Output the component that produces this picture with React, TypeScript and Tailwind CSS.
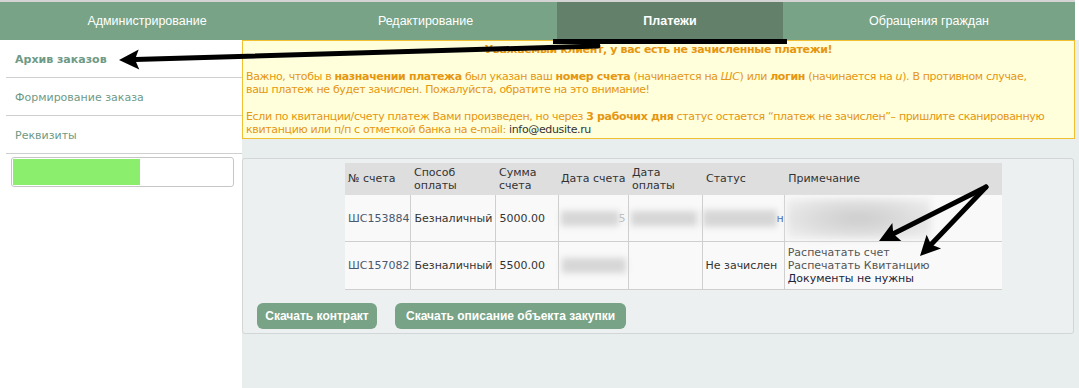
const tabs = [
  { label: 'Администрирование', w: 'w-[294px]', active: false },
  { label: 'Редактирование', w: 'w-[263px]', active: false },
  { label: 'Платежи', w: 'w-[226px]', active: true },
  { label: 'Обращения граждан', w: 'w-[292px]', active: false },
]

const sideItems = [
  { label: 'Архив заказов', bold: true },
  { label: 'Формирование заказа', bold: false },
  { label: 'Реквизиты', bold: false },
]

function Blur({ className }: { className: string }) {
  return <div className={`bg-[#d6d6d6] blur-[3px] ${className}`} />
}

// arrow with head, points computed from start/end
function Arrow({ x1, y1, x2, y2 }: { x1: number; y1: number; x2: number; y2: number }) {
  const dx = x2 - x1
  const dy = y2 - y1
  const len = Math.sqrt(dx * dx + dy * dy)
  const ux = dx / len
  const uy = dy / len
  const headLen = 20
  const headW = 10
  const bx = x2 - ux * headLen
  const by = y2 - uy * headLen
  const nx = bx + ux * 4
  const ny = by + uy * 4
  const pts = [
    [x2, y2],
    [bx - uy * headW, by + ux * headW],
    [nx, ny],
    [bx + uy * headW, by - ux * headW],
  ]
  return (
    <g>
      <line x1={x1} y1={y1} x2={nx} y2={ny} stroke="#000" strokeWidth="5" strokeLinecap="round" />
      <polygon points={pts.map(p => p.join(',')).join(' ')} fill="#000" />
    </g>
  )
}

export default function App() {
  return (
    <div className="relative w-[1079px] h-[388px] overflow-hidden bg-white font-['DejaVu_Sans',sans-serif] text-[11px]">
      <div className="h-[2px] w-[1075px] bg-[#d4d4d4]" />
      <nav className="flex h-[38px] w-[1075px] bg-[#78a386] font-['Liberation_Sans',sans-serif] text-[12.5px] text-white">
        {tabs.map(tab => (
          <div
            key={tab.label}
            className={`${tab.w} flex items-center justify-center ${tab.active ? 'bg-[#62806a] font-bold' : ''}`}
          >
            {tab.label}
          </div>
        ))}
      </nav>

      <div className="flex h-[348px]">
        <aside className="w-[242px] shrink-0 bg-white">
          <div className="ml-[6px]">
            {sideItems.map(item => (
              <div
                key={item.label}
                className={`flex h-[38px] items-center border-b border-[#cfcfcf] pl-[9px] pt-[3px] text-[#6e9a86] ${item.bold ? 'font-bold' : ''}`}
              >
                {item.label}
              </div>
            ))}
          </div>
          <div className="ml-[11px] mt-[3px] h-[30px] w-[223px] rounded-[3px] border border-[#c6c6c6] bg-white p-[1px]">
            <div className="h-full w-[127px] bg-[#8bef6d]" />
          </div>
        </aside>

        <main className="flex-1 bg-[#e8eded]">
          <div className="w-[833px] border border-[#f0c030] bg-[#ffffdc] px-[3px] pt-[2px] pb-[1px] leading-[13.4px] tracking-[-0.35px] text-[#e6960f]">
            <p className="text-center font-bold">Уважаемый клиент, у вас есть не зачисленные платежи!</p>
            <p className="h-[13.4px]" />
            <p className="whitespace-nowrap">
              Важно, чтобы в <b>назначении платежа</b> был указан ваш <b>номер счета</b> (начинается на <i>ШС</i>) или{' '}
              <b>логин</b> (начинается на <i>u</i>). В противном случае,
              <br />
              ваш платеж не будет зачислен. Пожалуйста, обратите на это внимание!
            </p>
            <p className="h-[13.4px]" />
            <p className="whitespace-nowrap">
              Если по квитанции/счету платеж Вами произведен, но через <b>3 рабочих дня</b> статус остается “платеж не
              зачислен”– пришлите сканированную
              <br />
              квитанцию или п/п с отметкой банка на e-mail: <span className="text-[#333]">info@edusite.ru</span>
            </p>
          </div>

          <section className="mt-[19px] w-[832px] rounded-[3px] border border-[#d2d6d6] bg-[#ecf0f0] pt-[4px] pb-[4px]">
            <table className="ml-[102px] border-collapse text-[#333] leading-[13px]">
              <thead>
                <tr className="h-[32px] bg-[#dedede] text-left align-middle">
                  <th className="w-[65px] pl-[3px] font-normal">№ счета</th>
                  <th className="w-[85px] pl-[4px] font-normal">Способ<br />оплаты</th>
                  <th className="w-[63px] pl-[4px] font-normal">Сумма<br />счета</th>
                  <th className="w-[70px] pl-[3px] font-normal">Дата счета</th>
                  <th className="w-[74px] pl-[4px] font-normal">Дата<br />оплаты</th>
                  <th className="w-[80px] pl-[4px] font-normal">Статус</th>
                  <th className="w-[218px] pl-[4px] font-normal">Примечание</th>
                </tr>
              </thead>
              <tbody className="bg-[#f9f9f9]">
                <tr className="h-[47px] border-b border-[#cfcfcf]">
                  <td className="pl-[3px] text-[#4a5870]">ШС153884</td>
                  <td className="border-l border-[#cfcfcf] pl-[4px]">Безналичный</td>
                  <td className="border-l border-[#cfcfcf] pl-[4px]">5000.00</td>
                  <td className="border-l border-[#cfcfcf] pl-[2px]">
                    <div className="flex items-center">
                      <Blur className="h-[15px] w-[58px]" />
                      <span className="text-[#bbb]">5</span>
                    </div>
                  </td>
                  <td className="border-l border-[#cfcfcf] pl-[2px]">
                    <Blur className="h-[15px] w-[66px]" />
                  </td>
                  <td className="border-l border-[#cfcfcf]">
                    <div className="flex items-center">
                      <Blur className="h-[17px] w-[74px]" />
                      <span className="text-[#3355aa]">н</span>
                    </div>
                  </td>
                  <td className="border-l border-[#cfcfcf] pl-[2px]">
                    <div className="h-[41px] w-[144px] bg-[radial-gradient(ellipse_at_center,#cdcdcd_0%,#dcdcdc_45%,#f2f2f2_100%)] blur-[3px]" />
                  </td>
                </tr>
                <tr className="h-[48px] border-b border-[#cfcfcf]">
                  <td className="pl-[3px] text-[#4a5870]">ШС157082</td>
                  <td className="border-l border-[#cfcfcf] pl-[4px]">Безналичный</td>
                  <td className="border-l border-[#cfcfcf] pl-[4px]">5500.00</td>
                  <td className="border-l border-[#cfcfcf] pl-[3px]">
                    <Blur className="h-[15px] w-[64px]" />
                  </td>
                  <td className="border-l border-[#cfcfcf]" />
                  <td className="border-l border-[#cfcfcf] pl-[3px]">Не зачислен</td>
                  <td className="border-l border-[#cfcfcf] pl-[3px] leading-[13px]">
                    <div className="text-[#555]">Распечатать счет</div>
                    <div className="text-[#555]">Распечатать Квитанцию</div>
                    <div className="text-[#1c2438]">Документы не нужны</div>
                  </td>
                </tr>
              </tbody>
            </table>

            <div className="ml-[14px] mt-[13px] flex gap-[18px] font-['Liberation_Sans',sans-serif] text-[12px] font-bold text-white">
              <button type="button" className="h-[26px] w-[120px] rounded-[6px] bg-[#78a386]">
                Скачать контракт
              </button>
              <button type="button" className="h-[26px] w-[231px] rounded-[6px] bg-[#78a386]">
                Скачать описание объекта закупки
              </button>
            </div>
          </section>
        </main>
      </div>

      <svg className="pointer-events-none absolute left-0 top-0" width="1079" height="388">
        <rect x="553" y="39" width="234" height="5" fill="#000" />
        <Arrow x1={598} y1={46} x2={119} y2={60} />
        <Arrow x1={986} y1={187} x2={879} y2={241} />
        <Arrow x1={986} y1={187} x2={920} y2={256} />
      </svg>
    </div>
  )
}
